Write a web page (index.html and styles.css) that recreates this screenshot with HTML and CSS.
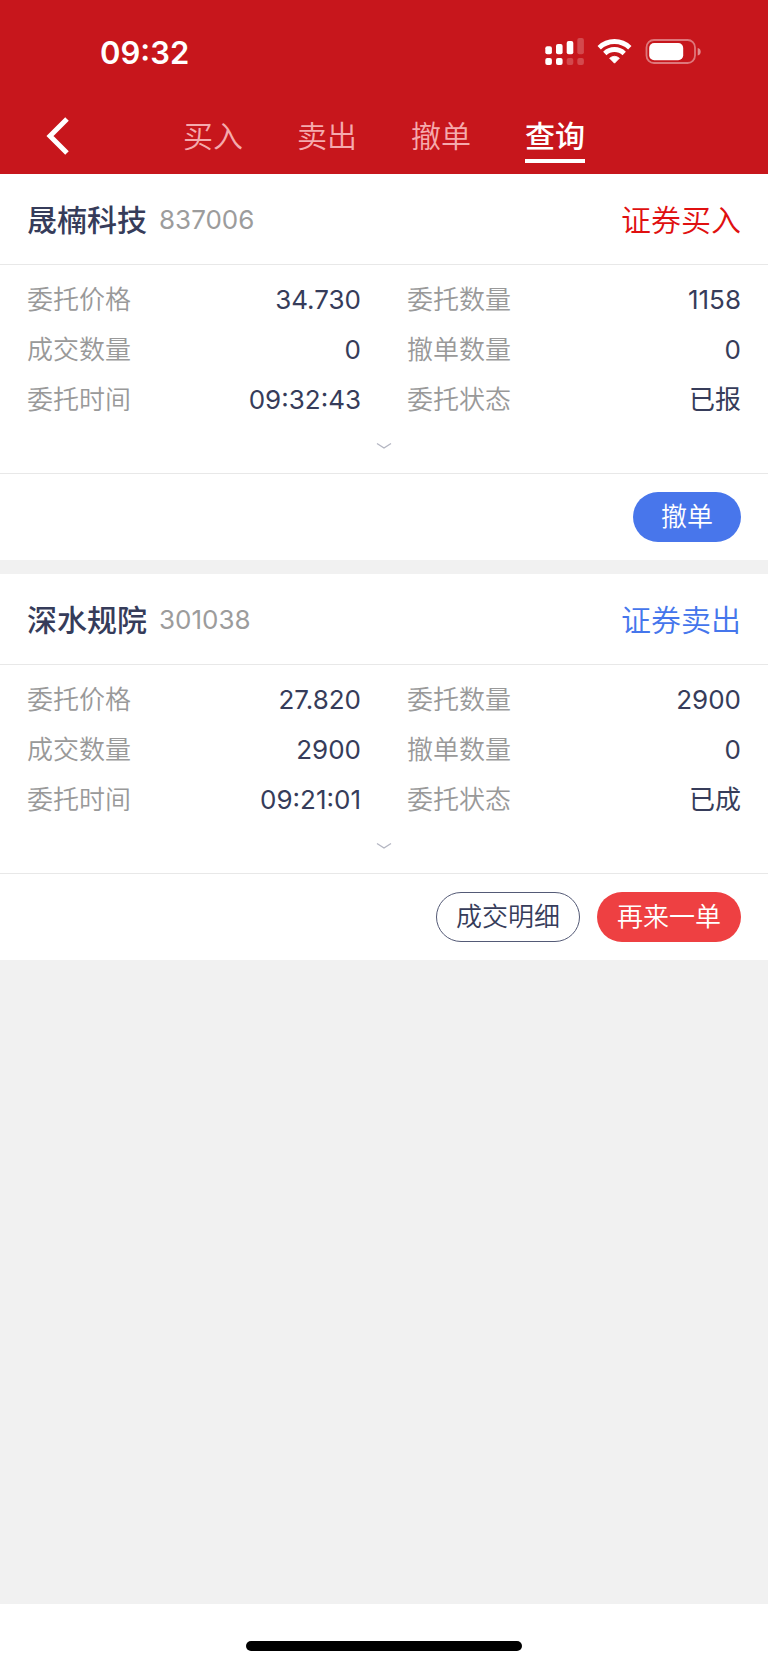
FILE: index.html
```html
<!DOCTYPE html>
<html lang="zh-CN">
<head>
    <meta charset="UTF-8">
    <meta name="viewport" content="width=device-width, initial-scale=1.0">
    <title>委托查询</title>
    <link rel="stylesheet" href="styles.css">
</head>
<body>
    <header class="header">
        <div class="status-bar">
            <span class="time">09:32</span>
            <div class="status-icons">
                <svg width="39" height="27" viewBox="0 0 39 27" fill="#fff">
                    <rect x="0.3" y="8.3" width="6.6" height="8" rx="2"/>
                    <rect x="11" y="6" width="6.6" height="10.3" rx="2"/>
                    <rect x="21.7" y="3" width="6.6" height="13.3" rx="2"/>
                    <rect x="32.3" y="0" width="6.6" height="16.3" rx="2" opacity="0.22"/>
                    <rect x="0.3" y="20" width="6.6" height="7" rx="2"/>
                    <rect x="11" y="20" width="6.6" height="7" rx="2"/>
                    <rect x="21.7" y="20" width="6.6" height="7" rx="2" opacity="0.22"/>
                    <rect x="32.3" y="20" width="6.6" height="7" rx="2" opacity="0.22"/>
                </svg>
                <svg width="35" height="25" viewBox="0 0 35 25" fill="none" stroke="#fff" stroke-width="4.8">
                    <path d="M2.2 8.7A22 22 0 0 1 32.8 8.7"/>
                    <path d="M7.8 14.4A14 14 0 0 1 27.2 14.4"/>
                    <path d="M12.6 19.2A8 8 0 0 1 22.4 19.2L17.5 24.2Z" fill="#fff" stroke-width="0.8" stroke-linejoin="round"/>
                </svg>
                <svg width="56" height="25" viewBox="0 0 56 25" fill="#fff">
                    <rect x="1.5" y="1" width="48.5" height="23" rx="7.5" fill="none" stroke="#fff" stroke-width="1.8" opacity="0.42"/>
                    <rect x="4.2" y="4" width="34" height="17.3" rx="5"/>
                    <path d="M52.7 9Q55.7 9.8 55.7 12.7T52.7 16.5Z" opacity="0.5"/>
                </svg>
            </div>
        </div>
        <nav class="nav">
            <button class="back" aria-label="返回">
                <svg width="24" height="38" viewBox="0 0 24 38" fill="none" stroke="#fff" stroke-width="5">
                    <path d="M21 2L4 19L21 36"/>
                </svg>
            </button>
            <div class="tabs">
                <a class="tab" href="#">买入</a>
                <a class="tab" href="#">卖出</a>
                <a class="tab" href="#">撤单</a>
                <a class="tab active" href="#">查询</a>
            </div>
        </nav>
    </header>

    <main class="orders">
        <section class="card">
            <div class="card-head">
                <h2 class="stock-name">晟楠科技</h2>
                <span class="stock-code">837006</span>
                <span class="side buy">证券买入</span>
            </div>
            <dl class="details">
                <div class="item"><dt>委托价格</dt><dd>34.730</dd></div>
                <div class="item"><dt>委托数量</dt><dd>1158</dd></div>
                <div class="item"><dt>成交数量</dt><dd>0</dd></div>
                <div class="item"><dt>撤单数量</dt><dd>0</dd></div>
                <div class="item"><dt>委托时间</dt><dd>09:32:43</dd></div>
                <div class="item"><dt>委托状态</dt><dd>已报</dd></div>
            </dl>
            <button class="expand" aria-label="展开">
                <svg width="16" height="8" viewBox="0 0 16 8" fill="none" stroke="#b4b6c2" stroke-width="1.4">
                    <path d="M1 1.5L8 6L15 1.5"/>
                </svg>
            </button>
            <div class="actions">
                <button class="btn btn-cancel">撤单</button>
            </div>
        </section>

        <section class="card">
            <div class="card-head">
                <h2 class="stock-name">深水规院</h2>
                <span class="stock-code">301038</span>
                <span class="side sell">证券卖出</span>
            </div>
            <dl class="details">
                <div class="item"><dt>委托价格</dt><dd>27.820</dd></div>
                <div class="item"><dt>委托数量</dt><dd>2900</dd></div>
                <div class="item"><dt>成交数量</dt><dd>2900</dd></div>
                <div class="item"><dt>撤单数量</dt><dd>0</dd></div>
                <div class="item"><dt>委托时间</dt><dd>09:21:01</dd></div>
                <div class="item"><dt>委托状态</dt><dd>已成</dd></div>
            </dl>
            <button class="expand" aria-label="展开">
                <svg width="16" height="8" viewBox="0 0 16 8" fill="none" stroke="#b4b6c2" stroke-width="1.4">
                    <path d="M1 1.5L8 6L15 1.5"/>
                </svg>
            </button>
            <div class="actions">
                <button class="btn btn-detail">成交明细</button>
                <button class="btn btn-again">再来一单</button>
            </div>
        </section>
    </main>

    <footer class="home-area">
        <div class="home-bar"></div>
    </footer>
</body>
</html>
```
FILE: styles.css
```css
* {
    box-sizing: border-box;
}
body {
    display: flex;
    flex-direction: column;
    min-height: 100vh;
    margin: 0;
    font-family: Inter, "Noto Sans CJK SC", sans-serif;
    font-size: 26px;
    color: #363c5a;
    background-color: #f1f1f1;
}
button {
    padding: 0;
    border: none;
    background: none;
    font-family: inherit;
    font-size: inherit;
    color: inherit;
    cursor: pointer;
}
svg {
    display: block;
}

/* header */
.header {
    background-color: #c7161c;
    color: #fff;
}
.status-bar {
    display: flex;
    justify-content: space-between;
    align-items: center;
    padding: 26px 67px 21px 100px;
}
.time {
    padding-top: 3px;
    font-size: 31px;
    font-weight: 600;
    line-height: 48px;
}
.status-icons {
    display: flex;
    align-items: center;
    gap: 13px;
}
.nav {
    display: flex;
    align-items: flex-start;
    padding: 18px 27px 11px 46px;
}
.back {
    display: flex;
    align-items: center;
    width: 137px;
    height: 40px;
}
.tabs {
    display: flex;
    gap: 54px;
}
.tab {
    padding-bottom: 3px;
    border-bottom: 4px solid transparent;
    font-size: 30px;
    font-weight: 350;
    line-height: 40px;
    color: #f5aaad;
    text-decoration: none;
}
.tab.active {
    border-color: #fff;
    font-weight: 500;
    color: #fff;
}

/* order cards */
.orders {
    display: flex;
    flex-direction: column;
    flex-grow: 1;
    gap: 14px;
}
.card {
    background-color: #fff;
}
.card-head {
    display: flex;
    align-items: center;
    gap: 12px;
    padding: 2px 27px 0;
    border-bottom: 1px solid #e8e8e8;
    line-height: 88px;
}
.stock-name {
    margin: 0;
    font-size: 30px;
    font-weight: 500;
}
.stock-code {
    color: #9c9c9c;
}
.side {
    margin-left: auto;
    font-size: 30px;
    font-weight: 350;
}
.buy {
    color: #e01010;
}
.sell {
    color: #4576ec;
}
.details {
    display: grid;
    grid-template-columns: 1fr 1fr;
    column-gap: 46px;
    margin: 0;
    padding: 10px 27px 0;
    line-height: 50px;
}
.item {
    display: flex;
    justify-content: space-between;
}
.item dt {
    font-weight: 350;
    color: #999;
}
.item dd {
    margin: 0;
}
.expand {
    display: flex;
    justify-content: center;
    width: 100%;
    height: 48px;
    padding-top: 17px;
}
.actions {
    display: flex;
    justify-content: flex-end;
    gap: 17px;
    padding: 18px 27px;
    border-top: 1px solid #e8e8e8;
}
.btn {
    height: 50px;
    padding: 0 20px;
    border-radius: 25px;
    font-weight: 350;
    line-height: 48px;
}
.btn-cancel {
    padding: 0 28px;
    color: #fff;
    background-color: #4876eb;
}
.btn-detail {
    padding: 0 19px;
    border: 1px solid #545a76;
}
.btn-again {
    color: #fff;
    background-color: #ee4042;
}

/* bottom strip */
.home-area {
    padding: 37px 0 14px;
    background-color: #fff;
}
.home-bar {
    width: 36%;
    height: 10px;
    margin: 0 auto;
    border-radius: 5px;
    background-color: #000;
}
```
